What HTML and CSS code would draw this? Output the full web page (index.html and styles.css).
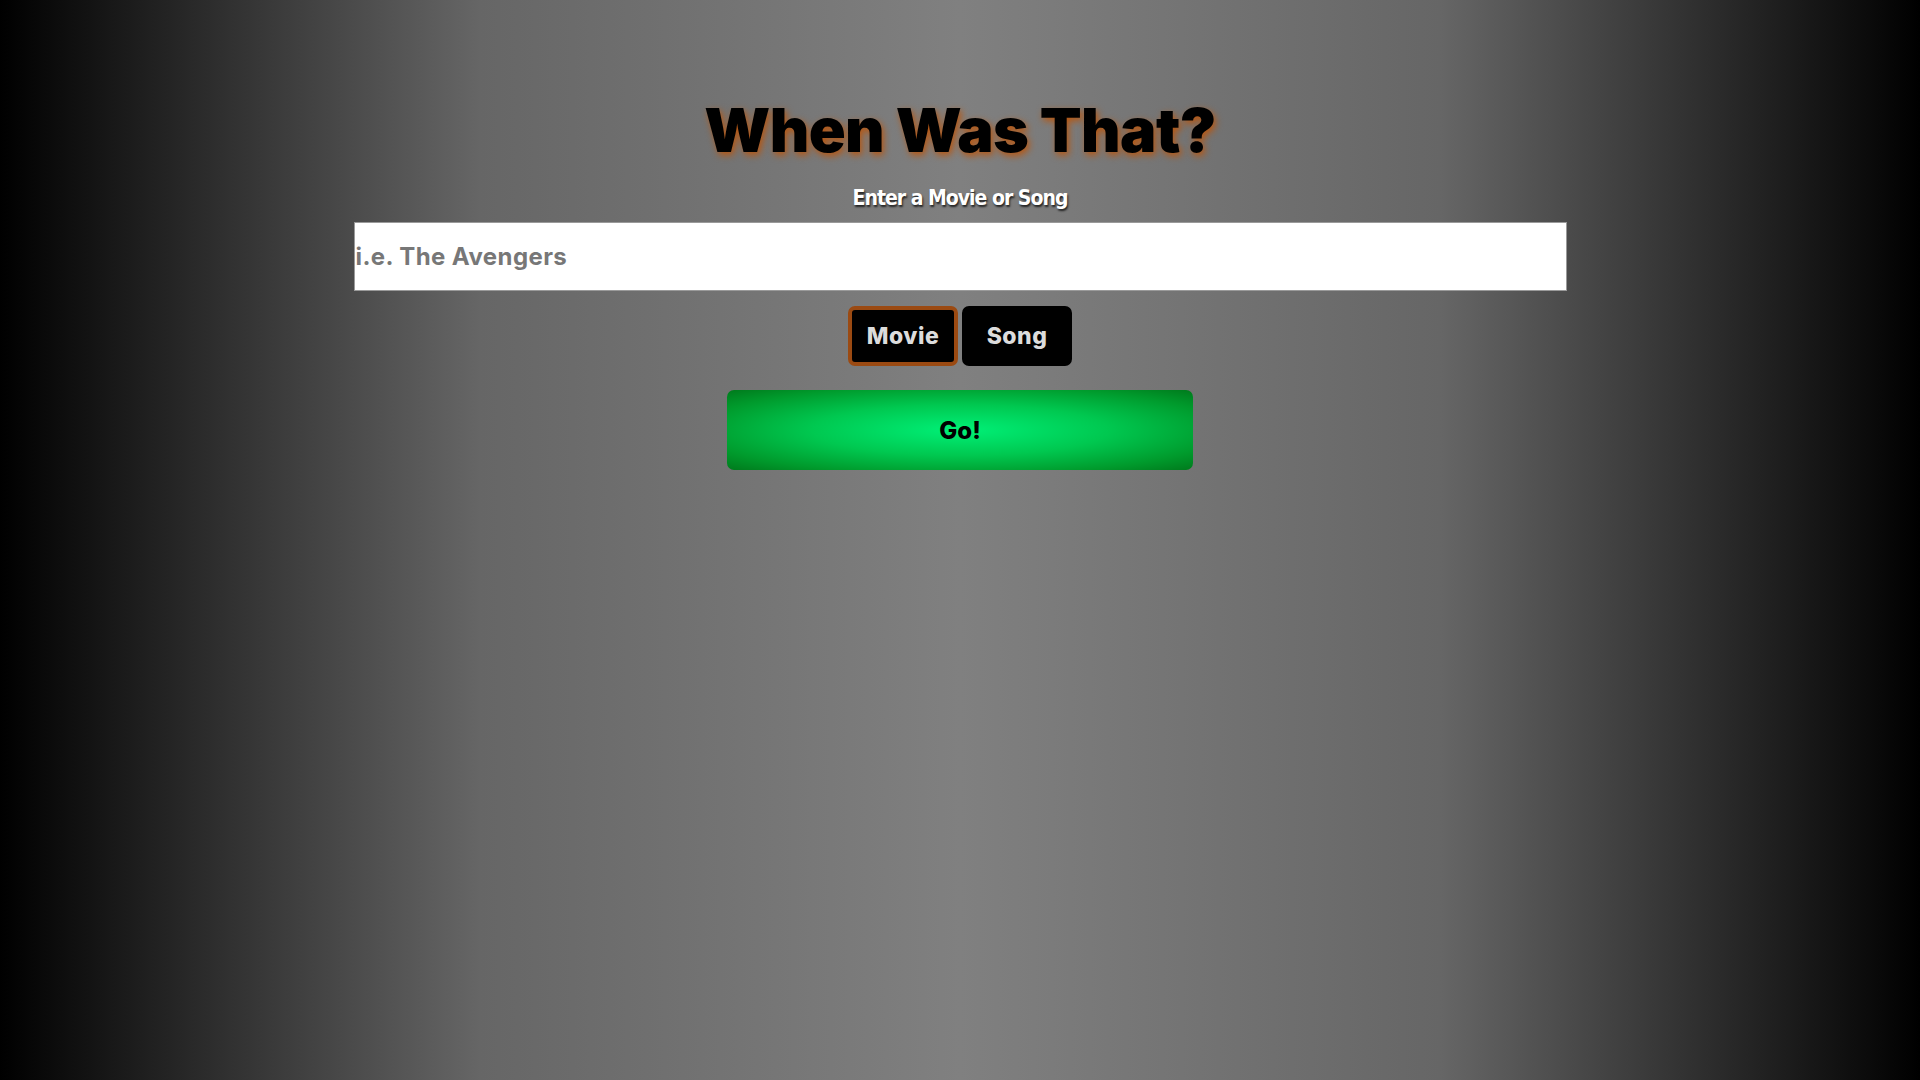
FILE: index.html
```html
<!DOCTYPE html>
<html lang="en">
<head>
<meta charset="utf-8">
<title>When Was That?</title>
<link rel="stylesheet" href="styles.css">
</head>
<body>
<main class="page">
  <h1 class="title">When Was That?</h1>
  <label class="subtitle" for="query">Enter a Movie or Song</label>
  <input class="search" id="query" type="text" placeholder="i.e. The Avengers">
  <div class="toggle">
    <button class="choice active" type="button">Movie</button>
    <button class="choice" type="button">Song</button>
  </div>
  <button class="go" type="button">Go!</button>
</main>
</body>
</html>
```
FILE: styles.css
```css
html, body {
  margin: 0;
  padding: 0;
  height: 100%;
}
body {
  background: linear-gradient(to right, #000 0%, #666 25%, #808080 50%, #666 75%, #000 100%);
  font-family: "Inter", "DejaVu Sans", sans-serif;
  min-height: 100vh;
}
.page {
  display: flex;
  flex-direction: column;
  align-items: center;
  padding-top: 90px;
}
.title {
  margin: 0;
  font-family: "Inter", sans-serif;
  font-weight: 900;
  font-size: 61px;
  line-height: 80px;
  letter-spacing: -0.6px;
  color: #000;
  text-shadow: 2px 3px 7px #b8560f;
}
.subtitle {
  margin-top: 14px;
  font-family: "DejaVu Sans Condensed", "DejaVu Sans", sans-serif;
  font-stretch: condensed;
  font-weight: 700;
  font-size: 21px;
  letter-spacing: -1px;
  line-height: 28px;
  color: #fff;
  text-shadow: 1px 2px 2px #222;
}
.search {
  box-sizing: border-box;
  margin-top: 10px;
  width: 1213px;
  height: 69px;
  padding: 0 0 0 1px;
  border: 1px solid #9a9a9a;
  background: #fff;
  font-family: "Inter", sans-serif;
  font-weight: 700;
  font-size: 24px;
  letter-spacing: 0.4px;
  color: #333;
  outline: none;
}
.search::placeholder {
  color: #777;
  opacity: 1;
}
.toggle {
  display: flex;
  gap: 4px;
  margin-top: 15px;
}
.choice {
  box-sizing: border-box;
  width: 110px;
  height: 60px;
  border: 4px solid #000;
  border-radius: 7px;
  background: #000;
  color: #dcdcdc;
  font-family: "Inter", sans-serif;
  font-weight: 800;
  font-size: 23px;
  letter-spacing: 0.5px;
  cursor: pointer;
}
.choice.active {
  border-color: #9b4a12;
}
.go {
  box-sizing: border-box;
  margin-top: 24px;
  width: 466px;
  height: 80px;
  border: none;
  border-radius: 7px;
  background: radial-gradient(ellipse at center, #00f077 0%, #00c850 45%, #009a2c 80%, #007a1c 100%);
  color: #000;
  font-family: "Inter", sans-serif;
  font-weight: 800;
  font-size: 24px;
  cursor: pointer;
}
```
